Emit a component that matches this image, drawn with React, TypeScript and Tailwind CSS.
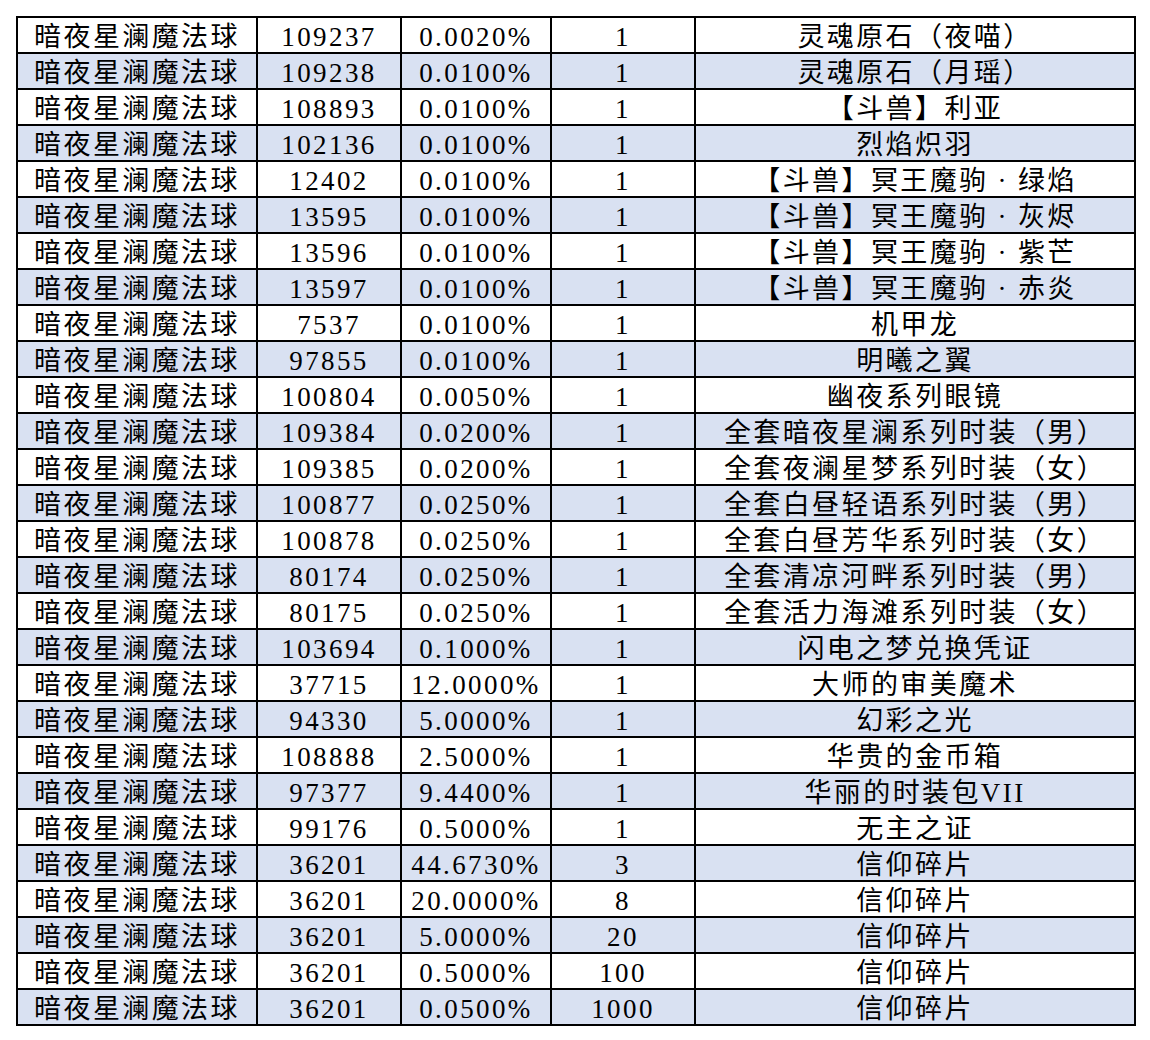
import React from 'react';

const rows: [string, string, string, string, string][] = [
  ['暗夜星澜魔法球', '109237', '0.0020%', '1', '灵魂原石（夜喵）'],
  ['暗夜星澜魔法球', '109238', '0.0100%', '1', '灵魂原石（月瑶）'],
  ['暗夜星澜魔法球', '108893', '0.0100%', '1', '【斗兽】利亚'],
  ['暗夜星澜魔法球', '102136', '0.0100%', '1', '烈焰炽羽'],
  ['暗夜星澜魔法球', '12402', '0.0100%', '1', '【斗兽】冥王魔驹·绿焰'],
  ['暗夜星澜魔法球', '13595', '0.0100%', '1', '【斗兽】冥王魔驹·灰烬'],
  ['暗夜星澜魔法球', '13596', '0.0100%', '1', '【斗兽】冥王魔驹·紫芒'],
  ['暗夜星澜魔法球', '13597', '0.0100%', '1', '【斗兽】冥王魔驹·赤炎'],
  ['暗夜星澜魔法球', '7537', '0.0100%', '1', '机甲龙'],
  ['暗夜星澜魔法球', '97855', '0.0100%', '1', '明曦之翼'],
  ['暗夜星澜魔法球', '100804', '0.0050%', '1', '幽夜系列眼镜'],
  ['暗夜星澜魔法球', '109384', '0.0200%', '1', '全套暗夜星澜系列时装（男）'],
  ['暗夜星澜魔法球', '109385', '0.0200%', '1', '全套夜澜星梦系列时装（女）'],
  ['暗夜星澜魔法球', '100877', '0.0250%', '1', '全套白昼轻语系列时装（男）'],
  ['暗夜星澜魔法球', '100878', '0.0250%', '1', '全套白昼芳华系列时装（女）'],
  ['暗夜星澜魔法球', '80174', '0.0250%', '1', '全套清凉河畔系列时装（男）'],
  ['暗夜星澜魔法球', '80175', '0.0250%', '1', '全套活力海滩系列时装（女）'],
  ['暗夜星澜魔法球', '103694', '0.1000%', '1', '闪电之梦兑换凭证'],
  ['暗夜星澜魔法球', '37715', '12.0000%', '1', '大师的审美魔术'],
  ['暗夜星澜魔法球', '94330', '5.0000%', '1', '幻彩之光'],
  ['暗夜星澜魔法球', '108888', '2.5000%', '1', '华贵的金币箱'],
  ['暗夜星澜魔法球', '97377', '9.4400%', '1', '华丽的时装包VII'],
  ['暗夜星澜魔法球', '99176', '0.5000%', '1', '无主之证'],
  ['暗夜星澜魔法球', '36201', '44.6730%', '3', '信仰碎片'],
  ['暗夜星澜魔法球', '36201', '20.0000%', '8', '信仰碎片'],
  ['暗夜星澜魔法球', '36201', '5.0000%', '20', '信仰碎片'],
  ['暗夜星澜魔法球', '36201', '0.5000%', '100', '信仰碎片'],
  ['暗夜星澜魔法球', '36201', '0.0500%', '1000', '信仰碎片'],
];

const widths = ['w-[240px]', 'w-[144px]', 'w-[150px]', 'w-[144px]', 'w-[440px]'];

// the middle dot is full width in the sheet, give it room on both sides
function Cell({ text }: { text: string }) {
  const dot = text.indexOf('·');
  if (dot < 0) return <>{text}</>;
  return (
    <>
      {text.slice(0, dot)}
      <span className="px-[9px]">·</span>
      {text.slice(dot + 1)}
    </>
  );
}

export default function App() {
  return (
    <div className="min-h-screen bg-white pt-[16px] pl-[16px]">
      <table
        className="border-collapse table-fixed w-[1118px] text-black text-[27px] tracking-[2.4px]"
        style={{ fontFamily: '"Liberation Serif", "Noto Sans CJK SC", serif' }}
      >
        <tbody>
          {rows.map((r, i) => (
            <tr key={i} className={i % 2 === 1 ? 'bg-[#d9e1f2]' : 'bg-white'}>
              {r.map((c, j) => (
                <td
                  key={j}
                  className={`${widths[j]} h-[36px] border-2 border-black text-center leading-none p-0 pt-[5px] whitespace-nowrap`}
                >
                  <Cell text={c} />
                </td>
              ))}
            </tr>
          ))}
        </tbody>
      </table>
    </div>
  );
}
